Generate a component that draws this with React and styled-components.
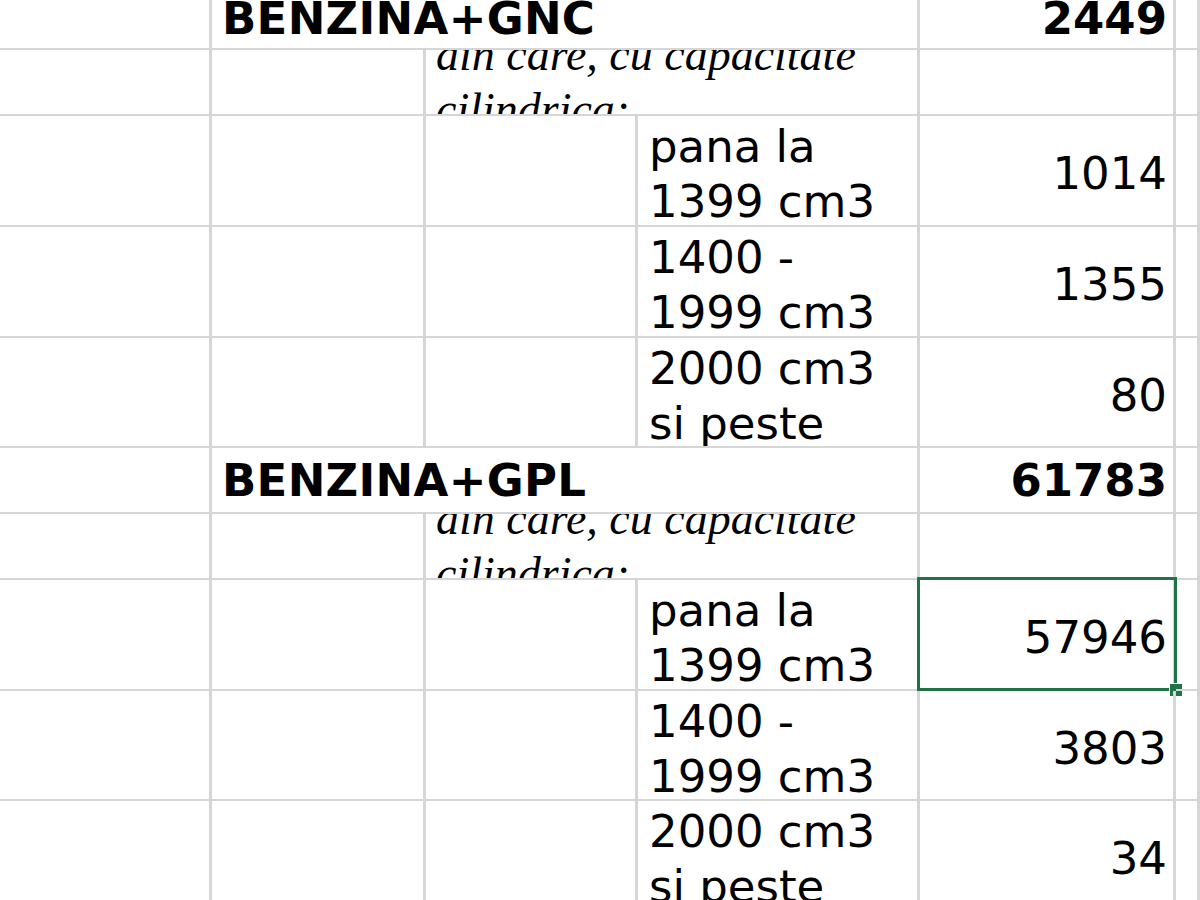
import React from "react";
import styled, { createGlobalStyle } from "styled-components";

const GlobalStyle = createGlobalStyle`
  html, body {
    margin: 0;
    padding: 0;
    background: #ffffff;
    overflow: hidden;
  }
  body {
    font-family: "DejaVu Sans", Verdana, sans-serif;
    color: #000;
  }
`;

const Sheet = styled.div`
  display: grid;
  grid-template-columns: 212px 214px 212px 282px 256px 1fr;
  grid-template-rows: 62px 66px 111px 111px 110px 66px 66px 111px 110px 111px;
  margin-top: -12px;
  width: 1200px;
  height: 912px;
  overflow: hidden;
  background: #fff;
`;

const Cell = styled.div`
  position: relative;
  box-sizing: border-box;
  grid-column: span ${(p) => p.$span || 1};
  border-right: 3px solid #d6d6d6;
  border-bottom: 2px solid #d6d6d6;
  overflow: ${(p) => (p.$clip ? "hidden" : "visible")};
  display: flex;
  min-width: 0;
`;

const Label = styled.div`
  align-self: center;
  padding-left: 10px;
  font-family: "DejaVu Sans", Verdana, sans-serif;
  font-weight: 700;
  font-size: 45px;
  line-height: 55px;
  white-space: nowrap;
  letter-spacing: 0.3px;
`;

const Note = styled.div`
  align-self: center;
  padding: 0 10px;
  font-family: "Liberation Serif", "Times New Roman", serif;
  font-style: italic;
  font-size: 46px;
  line-height: 55px;
`;

const Range = styled.div`
  align-self: flex-start;
  padding: 3px 10px 0 11px;
  font-size: 45px;
  line-height: 55px;
`;

const Value = styled.div`
  margin-left: auto;
  align-self: center;
  padding: ${(p) => (p.$bold ? "0" : "6px")} 6px 0 0;
  font-size: 45px;
  line-height: 55px;
  font-weight: ${(p) => (p.$bold ? 700 : 400)};
  white-space: nowrap;
`;

const Selection = styled.div`
  position: absolute;
  top: -3px;
  left: -3px;
  right: -4px;
  bottom: -2px;
  border: 3px solid #217346;
  pointer-events: none;
`;

const Handle = styled.div`
  position: absolute;
  right: -9px;
  bottom: -9px;
  width: 12px;
  height: 12px;
  background: #217346;
  border: 1px solid #fff;
`;

const Empty = () => <Cell />;

function Group({ fuel, total, rows, selected }) {
  return (
    <>
      <Empty />
      <Cell $span={3}>
        <Label>{fuel}</Label>
      </Cell>
      <Cell>
        <Value $bold>{total}</Value>
      </Cell>
      <Empty />

      <Empty />
      <Empty />
      <Cell $span={2} $clip>
        <Note>din care, cu capacitate cilindrica:</Note>
      </Cell>
      <Empty />
      <Empty />

      {rows.map((r, i) => (
        <React.Fragment key={r.label}>
          <Empty />
          <Empty />
          <Empty />
          <Cell $clip>
            <Range>{r.label}</Range>
          </Cell>
          <Cell>
            <Value>{r.value}</Value>
            {selected === i && (
              <Selection>
                <Handle />
              </Selection>
            )}
          </Cell>
          <Empty />
        </React.Fragment>
      ))}
    </>
  );
}

export default function App() {
  return (
    <>
      <GlobalStyle />
      <Sheet>
        <Group
          fuel="BENZINA+GNC"
          total="2449"
          rows={[
            { label: "pana la 1399 cm3", value: "1014" },
            { label: "1400 - 1999 cm3", value: "1355" },
            { label: "2000 cm3 si peste", value: "80" },
          ]}
        />
        <Group
          fuel="BENZINA+GPL"
          total="61783"
          selected={0}
          rows={[
            { label: "pana la 1399 cm3", value: "57946" },
            { label: "1400 - 1999 cm3", value: "3803" },
            { label: "2000 cm3 si peste", value: "34" },
          ]}
        />
      </Sheet>
    </>
  );
}
